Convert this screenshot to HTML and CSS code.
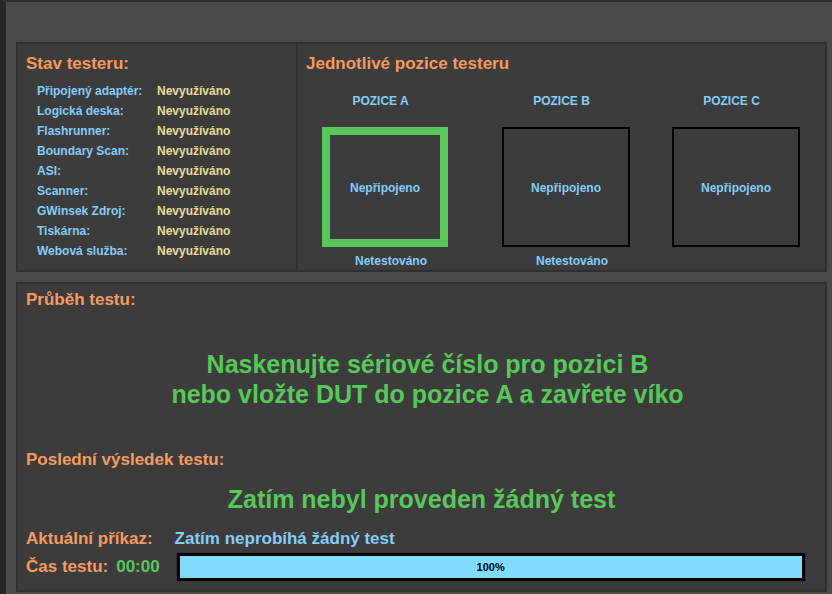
FILE: index.html
```html
<!DOCTYPE html>
<html lang="cs">
<head>
<meta charset="utf-8">
<title>Tester</title>
<link rel="stylesheet" href="styles.css">
</head>
<body>
<div class="side-mark"></div>
<div class="page">
  <section class="top-panel">
    <div class="status-col">
      <h2 class="heading">Stav testeru:</h2>
      <div class="status-list">
        <div class="row"><span class="label">Připojený adaptér:</span><span class="value">Nevyužíváno</span></div>
        <div class="row"><span class="label">Logická deska:</span><span class="value">Nevyužíváno</span></div>
        <div class="row"><span class="label">Flashrunner:</span><span class="value">Nevyužíváno</span></div>
        <div class="row"><span class="label">Boundary Scan:</span><span class="value">Nevyužíváno</span></div>
        <div class="row"><span class="label">ASI:</span><span class="value">Nevyužíváno</span></div>
        <div class="row"><span class="label">Scanner:</span><span class="value">Nevyužíváno</span></div>
        <div class="row"><span class="label">GWinsek Zdroj:</span><span class="value">Nevyužíváno</span></div>
        <div class="row"><span class="label">Tiskárna:</span><span class="value">Nevyužíváno</span></div>
        <div class="row"><span class="label">Webová služba:</span><span class="value">Nevyužíváno</span></div>
      </div>
    </div>
    <div class="positions-col">
      <h2 class="heading">Jednotlivé pozice testeru</h2>
      <div class="positions">
        <div class="position">
          <div class="pos-title">POZICE A</div>
          <div class="pos-box active">Nepřipojeno</div>
          <div class="pos-state">Netestováno</div>
        </div>
        <div class="position">
          <div class="pos-title">POZICE B</div>
          <div class="pos-box">Nepřipojeno</div>
          <div class="pos-state">Netestováno</div>
        </div>
        <div class="position">
          <div class="pos-title">POZICE C</div>
          <div class="pos-box">Nepřipojeno</div>
          <div class="pos-state"></div>
        </div>
      </div>
    </div>
  </section>
  <section class="bottom-panel">
    <h2 class="heading">Průběh testu:</h2>
    <div class="instruction">Naskenujte sériové číslo pro pozici B<br>nebo vložte DUT do pozice A a zavřete víko</div>
    <h2 class="heading last-title">Poslední výsledek testu:</h2>
    <div class="result">Zatím nebyl proveden žádný test</div>
    <div class="command-row">
      <span class="heading-inline">Aktuální příkaz:</span>
      <span class="command">Zatím neprobíhá žádný test</span>
    </div>
    <div class="time-row">
      <span class="heading-inline">Čas testu:</span>
      <span class="time">00:00</span>
      <div class="progress"><div class="progress-fill" style="width:100%"></div><span class="progress-text">100%</span></div>
    </div>
  </section>
</div>
</body>
</html>
```
FILE: styles.css
```css
* { box-sizing: border-box; }
html, body { margin: 0; padding: 0; }
body {
  width: 832px;
  height: 594px;
  overflow: hidden;
  background: #4a4a4a;
  border-top: 2px solid #303030;
  border-left: 6px solid #262626;
  font-family: "Liberation Sans", Arial, sans-serif;
  position: relative;
}
.side-mark {
  position: absolute;
  left: -6px;
  top: 262px;
  width: 6px;
  height: 86px;
  background: #7a1a1c;
  clip-path: polygon(0 0, 100% 0, 100% 30%, 40% 100%, 0 100%);
}
.page {
  padding: 40px 5px 0 10px;
}
.heading, .heading-inline {
  margin: 0;
  font-size: 17px;
  line-height: 20px;
  font-weight: bold;
  color: #f59a60;
}
.top-panel {
  height: 230px;
  border: 2px solid #313131;
  background: #3c3c3c;
  display: grid;
  grid-template-columns: 278px 1fr;
}
.status-col {
  padding: 10px 0 0 8px;
}
.status-list {
  margin-top: 7px;
  padding-left: 11px;
}
.row {
  display: flex;
  height: 20px;
  line-height: 20px;
  font-size: 12px;
  font-weight: bold;
}
.label {
  width: 120px;
  color: #86cdf8;
}
.value {
  color: #e4df9e;
}
.positions-col {
  border-left: 2px solid #313131;
  padding: 10px 0 0 8px;
}
.positions {
  margin-left: -8px;
  margin-top: 19px;
  display: grid;
  grid-template-columns: 174px 188px 152px;
}
.position {
  display: flex;
  flex-direction: column;
  align-items: center;
}
.pos-title {
  font-size: 12px;
  font-weight: bold;
  line-height: 16px;
  color: #86cdf8;
  margin-bottom: 18px;
  padding-right: 9px;
}
.pos-box {
  width: 128px;
  height: 120px;
  border: 2px solid #000;
  display: flex;
  align-items: center;
  justify-content: center;
  font-size: 12px;
  font-weight: bold;
  color: #86cdf8;
  padding-top: 2px;
}
.pos-box.active {
  width: 126px;
  border: 8px solid #58c85a;
}
.pos-state {
  margin-top: 6px;
  height: 16px;
  font-size: 12px;
  font-weight: bold;
  line-height: 16px;
  color: #86cdf8;
  padding-left: 12px;
}
.bottom-panel {
  margin-top: 10px;
  height: 310px;
  border: 2px solid #313131;
  background: #3c3c3c;
  padding: 6px 8px 0 8px;
}
.instruction {
  margin-top: 39px;
  padding-left: 12px;
  text-align: center;
  font-size: 25px;
  line-height: 30px;
  font-weight: bold;
  color: #58c85a;
}
.last-title {
  margin-top: 41px;
}
.result {
  margin-top: 14px;
  text-align: center;
  font-size: 25px;
  line-height: 30px;
  font-weight: bold;
  color: #58c85a;
}
.command-row {
  margin-top: 15px;
  display: flex;
  gap: 22px;
  height: 20px;
}
.command {
  font-size: 17px;
  line-height: 20px;
  font-weight: bold;
  color: #86cdf8;
}
.time-row {
  margin-top: 4px;
  display: flex;
  align-items: center;
}
.time {
  margin-left: 8px;
  font-size: 17px;
  line-height: 20px;
  font-weight: bold;
  color: #58c85a;
}
.progress {
  margin-left: 17px;
  width: 628px;
  height: 28px;
  border: 3px solid #000;
  box-shadow: 0 0 0 1px #333;
  background: #3c3c3c;
  position: relative;
  display: flex;
  align-items: center;
  justify-content: center;
}
.progress-fill {
  position: absolute;
  left: 0;
  top: 0;
  bottom: 0;
  background: #80dbff;
}
.progress-text {
  position: relative;
  font-size: 11px;
  font-weight: bold;
  color: #000;
}
```
